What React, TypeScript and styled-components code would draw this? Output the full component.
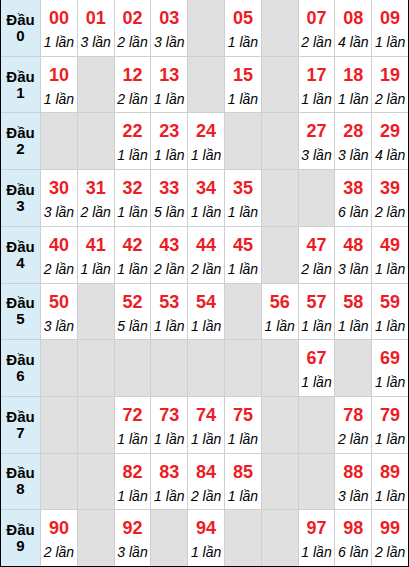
import React from "react";
import styled, { createGlobalStyle } from "styled-components";

const GlobalStyle = createGlobalStyle`
  html, body { margin: 0; padding: 0; background: #fff; }
  body { font-family: "Liberation Sans", Arial, sans-serif; }
`;

const Board = styled.div`
  box-sizing: border-box;
  width: 409px;
  height: 567px;
  border-left: 1px solid #000;
  border-right: 1px solid #000;
  border-bottom: 1px solid #000;
  display: grid;
  grid-template-columns: 39px repeat(10, 1fr);
  grid-template-rows: repeat(10, 1fr);
  gap: 1px;
  background: #cfcfcf;
  font-family: "Liberation Sans", Arial, sans-serif;
`;

const HeadCell = styled.div`
  background: #d9edf7;
  display: flex;
  flex-direction: column;
  align-items: center;
  justify-content: center;
  font-weight: bold;
  font-size: 15px;
  line-height: 16px;
  color: #000;
`;

const Cell = styled.div<{ $empty?: boolean }>`
  background: ${(p) => (p.$empty ? "#e0e0e0" : "#fff")};
  display: flex;
  flex-direction: column;
  align-items: center;
  justify-content: flex-start;
  padding-top: 6px;
  box-sizing: border-box;
  overflow: hidden;
`;

const Num = styled.div`
  color: #ee1c25;
  font-weight: bold;
  font-size: 18px;
  line-height: 24px;
`;

const Count = styled.div`
  color: #000;
  font-style: italic;
  font-size: 14px;
  line-height: 25px;
  white-space: nowrap;
`;

const data: (number | null)[][] = [
  [1, 3, 2, 3, null, 1, null, 2, 4, 1],
  [1, null, 2, 1, null, 1, null, 1, 1, 2],
  [null, null, 1, 1, 1, null, null, 3, 3, 4],
  [3, 2, 1, 5, 1, 1, null, null, 6, 2],
  [2, 1, 1, 2, 2, 1, null, 2, 3, 1],
  [3, null, 5, 1, 1, null, 1, 1, 1, 1],
  [null, null, null, null, null, null, null, 1, null, 1],
  [null, null, 1, 1, 1, 1, null, null, 2, 1],
  [null, null, 1, 1, 2, 1, null, null, 3, 1],
  [2, null, 3, null, 1, null, null, 1, 6, 2],
];

export default function App() {
  return (
    <>
      <GlobalStyle />
      <Board>
        {data.map((row, r) => (
          <React.Fragment key={r}>
            <HeadCell>
              <span>Đầu</span>
              <span>{r}</span>
            </HeadCell>
            {row.map((c, i) =>
              c === null ? (
                <Cell key={i} $empty />
              ) : (
                <Cell key={i}>
                  <Num>{`${r}${i}`}</Num>
                  <Count>{c} lần</Count>
                </Cell>
              )
            )}
          </React.Fragment>
        ))}
      </Board>
    </>
  );
}
